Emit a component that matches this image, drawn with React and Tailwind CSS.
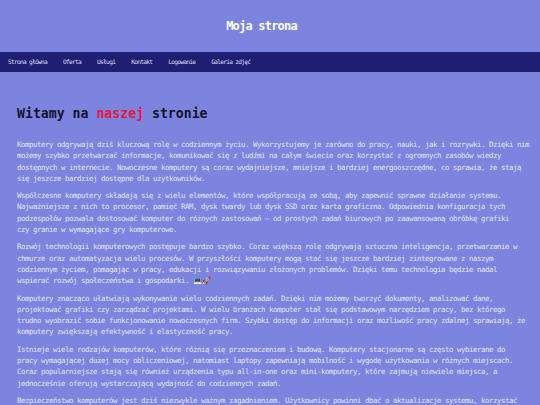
import React from 'react';

const mono = { fontFamily: '"DejaVu Sans Mono", "Liberation Mono", monospace' };

const navItems = ['Strona główna', 'Oferta', 'Usługi', 'Kontakt', 'Logowanie', 'Galeria zdjęć'];

// each paragraph is kept as the lines shown on the page
const paragraphs = [
  [
    'Komputery odgrywają dziś kluczową rolę w codziennym życiu. Wykorzystujemy je zarówno do pracy, nauki, jak i rozrywki. Dzięki nim',
    'możemy szybko przetwarzać informacje, komunikować się z ludźmi na całym świecie oraz korzystać z ogromnych zasobów wiedzy',
    'dostępnych w internecie. Nowoczesne komputery są coraz wydajniejsze, mniejsze i bardziej energooszczędne, co sprawia, że stają',
    'się jeszcze bardziej dostępne dla użytkowników.',
  ],
  [
    'Współczesne komputery składają się z wielu elementów, które współpracują ze sobą, aby zapewnić sprawne działanie systemu.',
    'Najważniejsze z nich to procesor, pamięć RAM, dysk twardy lub dysk SSD oraz karta graficzna. Odpowiednia konfiguracja tych',
    'podzespołów pozwala dostosować komputer do różnych zastosowań – od prostych zadań biurowych po zaawansowaną obróbkę grafiki',
    'czy granie w wymagające gry komputerowe.',
  ],
  [
    'Rozwój technologii komputerowych postępuje bardzo szybko. Coraz większą rolę odgrywają sztuczna inteligencja, przetwarzanie w',
    'chmurze oraz automatyzacja wielu procesów. W przyszłości komputery mogą stać się jeszcze bardziej zintegrowane z naszym',
    'codziennym życiem, pomagając w pracy, edukacji i rozwiązywaniu złożonych problemów. Dzięki temu technologia będzie nadal',
    'wspierać rozwój społeczeństwa i gospodarki. 💻🚀',
  ],
  [
    'Komputery znacząco ułatwiają wykonywanie wielu codziennych zadań. Dzięki nim możemy tworzyć dokumenty, analizować dane,',
    'projektować grafiki czy zarządzać projektami. W wielu branżach komputer stał się podstawowym narzędziem pracy, bez którego',
    'trudno wyobrazić sobie funkcjonowanie nowoczesnych firm. Szybki dostęp do informacji oraz możliwość pracy zdalnej sprawiają, że',
    'komputery zwiększają efektywność i elastyczność pracy.',
  ],
  [
    'Istnieje wiele rodzajów komputerów, które różnią się przeznaczeniem i budową. Komputery stacjonarne są często wybierane do',
    'pracy wymagającej dużej mocy obliczeniowej, natomiast laptopy zapewniają mobilność i wygodę użytkowania w różnych miejscach.',
    'Coraz popularniejsze stają się również urządzenia typu all-in-one oraz mini-komputery, które zajmują niewiele miejsca, a',
    'jednocześnie oferują wystarczającą wydajność do codziennych zadań.',
  ],
  [
    'Bezpieczeństwo komputerów jest dziś niezwykle ważnym zagadnieniem. Użytkownicy powinni dbać o aktualizacje systemu, korzystać',
    'z programów antywirusowych oraz regularnie tworzyć kopie zapasowe ważnych danych.',
  ],
];

export default function App() {
  return (
    <div className="min-h-screen bg-[#7d84df]" style={mono}>
      {/* Header */}
      <header className="h-[52px] flex items-center justify-center pr-[17px]">
        <h1 className="text-[12px] font-bold tracking-[-0.8px] text-white">Moja strona</h1>
      </header>

      {/* Nav */}
      <nav className="h-[20px] bg-[#1e1f72] flex items-center">
        {navItems.map((item) => (
          <a key={item} href="#" className="px-[8px] text-[6.2px] tracking-[-0.72px] text-[#dcdef7]">
            {item}
          </a>
        ))}
      </nav>

      {/* Main */}
      <main className="px-[17px] pt-[34px]">
        <h2 className="text-[13.2px] leading-[16px] font-bold text-[#14132e] mb-[17px]">
          Witamy na <span className="text-[#e3183f]">naszej</span> stronie
        </h2>
        {paragraphs.map((lines, i) => (
          <p key={i} className="whitespace-nowrap text-[7.4px] leading-[11.3px] tracking-[-0.45px] text-[#e4e6f8] mb-[6px]">
            {lines.map((line, j) => (
              <React.Fragment key={j}>
                {line}
                {j < lines.length - 1 && <br />}
              </React.Fragment>
            ))}
          </p>
        ))}
      </main>
    </div>
  );
}
